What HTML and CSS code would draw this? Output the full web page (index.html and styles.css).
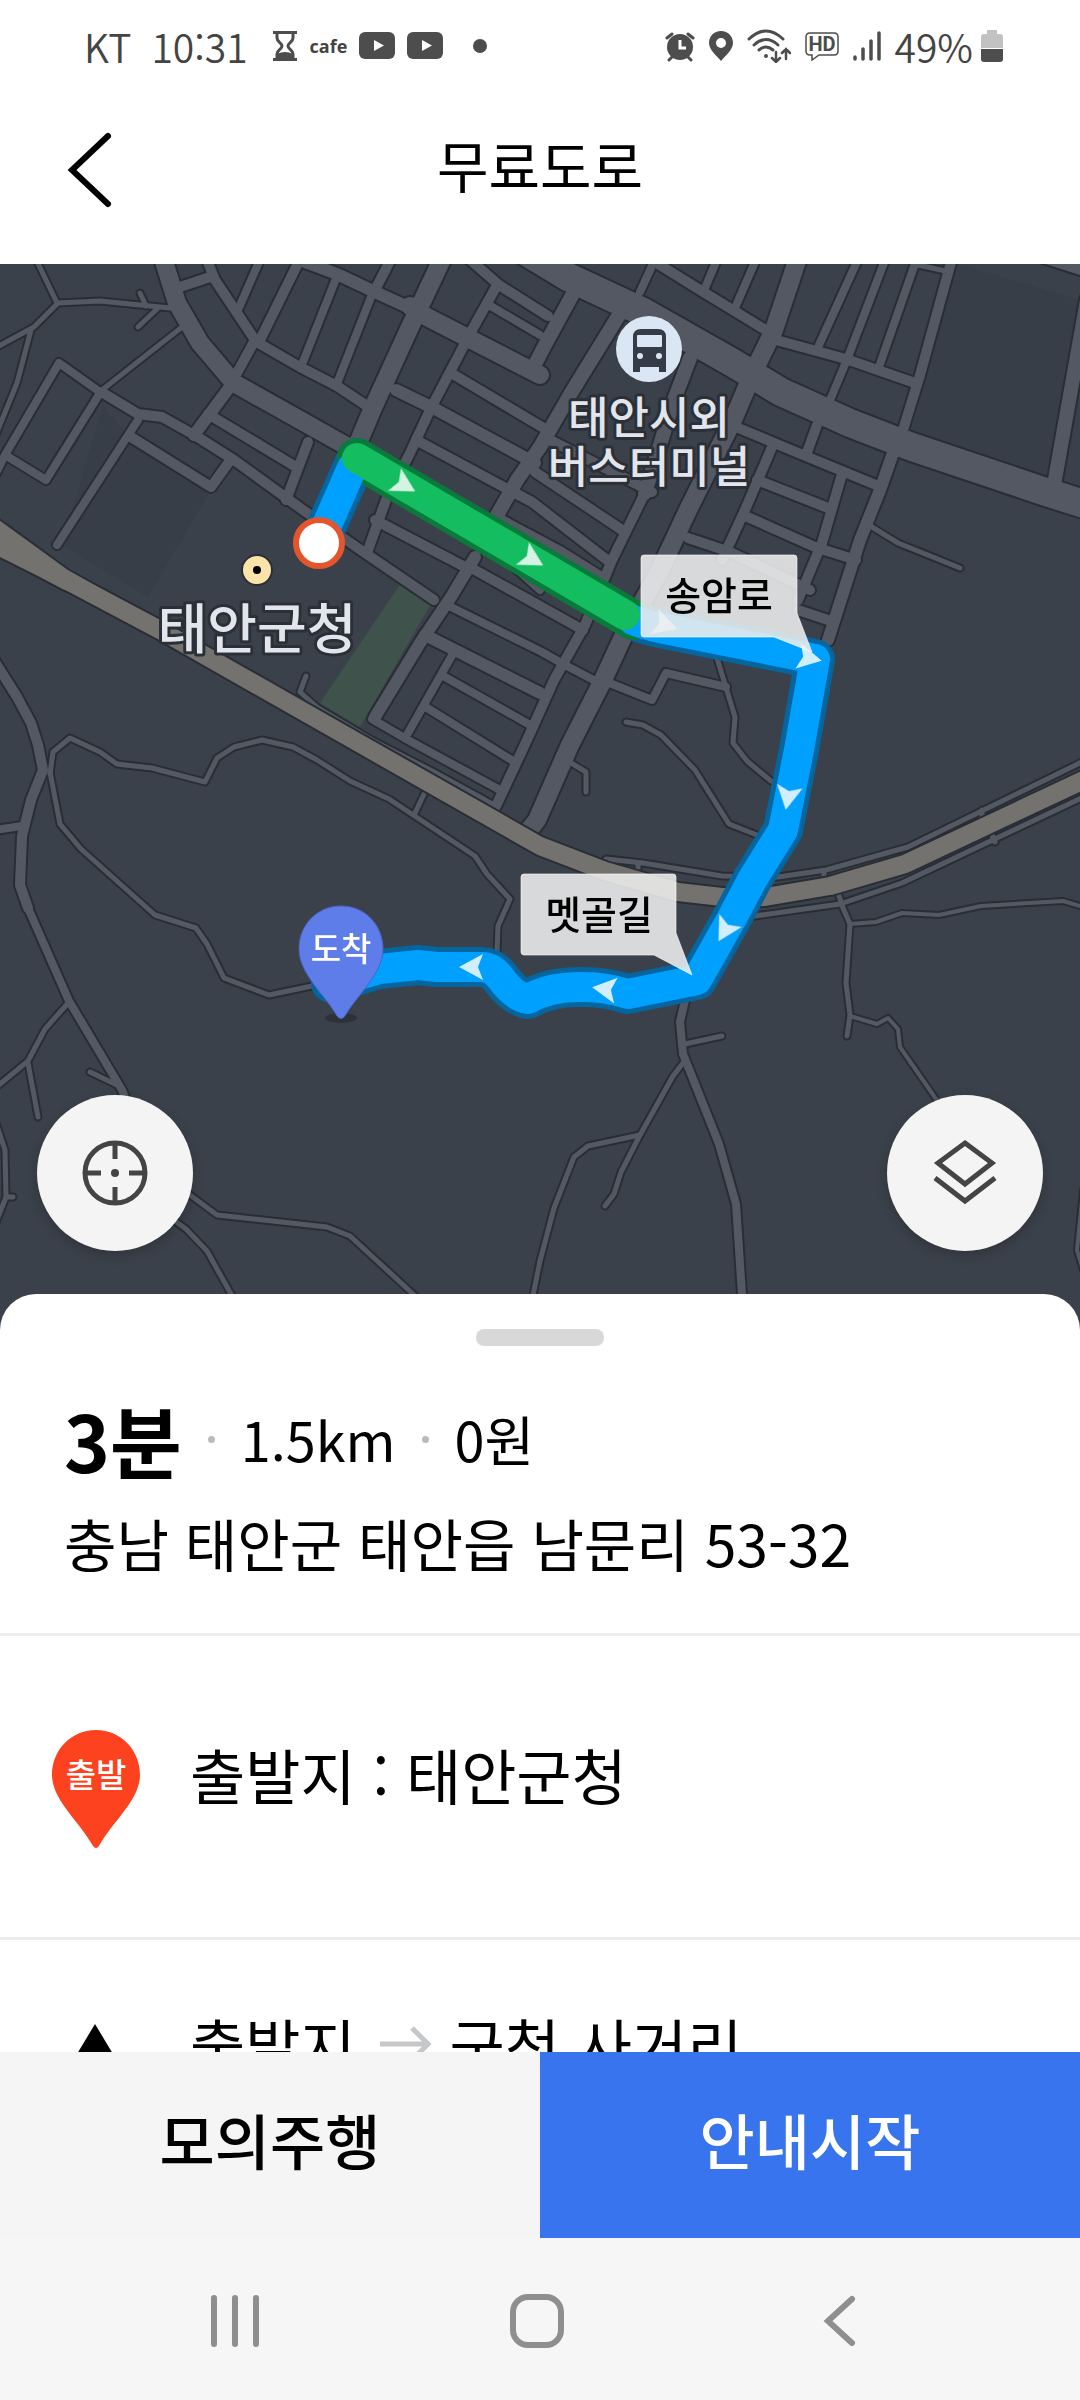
FILE: index.html
```html
<!DOCTYPE html>
<html lang="ko">
<head>
    <meta charset="UTF-8">
    <meta name="viewport" content="width=device-width, initial-scale=1.0">
    <title>무료도로</title>
    <link rel="stylesheet" href="styles.css">
</head>
<body>
    <div class="status-bar">
        <span class="carrier">KT</span>
        <span class="clock">10:31</span>
        <div class="status-icons">
            <svg width="26" height="32" viewBox="0 0 26 32" fill="none" stroke="#4d4d4d" stroke-width="3">
                <path d="M1 2.500H25M1 29.500H25" />
                <path d="M5 3V8C5 12 10 13 10 16S5 20 5 24V29M21 3V8C21 12 16 13 16 16S21 20 21 24V29" />
                <path d="M5 24Q13 20 21 24V29H5Z" fill="#4d4d4d" stroke="none" />
            </svg>
            <span class="cafe">cafe</span>
            <svg width="36" height="28" viewBox="0 0 36 28">
                <rect width="36" height="27" rx="6" fill="#4d4d4d" />
                <path d="M15 8L25 13.500L15 19Z" fill="#fff" />
            </svg>
            <svg width="36" height="28" viewBox="0 0 36 28">
                <rect width="36" height="27" rx="6" fill="#4d4d4d" />
                <path d="M15 8L25 13.500L15 19Z" fill="#fff" />
            </svg>
        </div>
        <span class="more-dot"></span>
        <div class="status-right">
            <svg width="30" height="32" viewBox="0 0 30 32">
                <circle cx="15" cy="17" r="13" fill="#4d4d4d" />
                <path d="M2 8L7 4M28 8L23 4M4 30L8 26M26 30L22 26" stroke="#4d4d4d" stroke-width="3" stroke-linecap="round" />
                <path d="M15 10V18H21" stroke="#fff" stroke-width="3" fill="none" />
            </svg>
            <svg width="24" height="32" viewBox="0 0 24 32">
                <path d="M12 1C5 1 0 6 0 13C0 20 8 26 12 31C16 26 24 20 24 13C24 6 19 1 12 1ZM12 8A5 5 0 1 1 12 18A5 5 0 1 1 12 8Z" fill="#4d4d4d" fill-rule="evenodd" />
            </svg>
            <svg width="44" height="34" viewBox="0 0 44 34" fill="none" stroke="#4d4d4d" stroke-width="3" stroke-linecap="round">
                <path d="M2 10Q19 -6 36 10M7 16Q19 5 31 16M12 21Q19 15 26 21" />
                <circle cx="19" cy="27" r="2" fill="#4d4d4d" stroke="none" />
                <path d="M29 23V32M25 29L29 33L33 29M39 30V20M35 24L39 20L43 24" stroke-width="2.500" />
            </svg>
            <svg width="34" height="30" viewBox="0 0 34 30">
                <path d="M5 2H29Q33 2 33 6V20Q33 24 29 24H14L7 29V24H5Q1 24 1 20V6Q1 2 5 2Z" fill="none" stroke="#4d4d4d" stroke-width="1.500" />
                <text x="17" y="20" class="hd">HD</text>
            </svg>
            <svg width="28" height="32" viewBox="0 0 28 32" stroke="#4d4d4d" stroke-width="3.500" stroke-linecap="round">
                <path d="M2 27V29M10 19V29M18 11V29M26 3V29" />
            </svg>
            <span class="percent">49%</span>
            <svg width="22" height="34" viewBox="0 0 22 34">
                <path d="M6 1H16V5H19Q22 5 22 8V19H0V8Q0 5 3 5H6Z" fill="#c2c2c2" />
                <path d="M0 20H22V30Q22 33 19 33H3Q0 33 0 30Z" fill="#4d4d4d" />
            </svg>
        </div>
    </div>

    <header class="header">
        <button class="back-btn" aria-label="뒤로">
            <svg width="48" height="80" viewBox="0 0 48 80" fill="none" stroke="#000" stroke-width="6" stroke-linecap="round">
                <path d="M42 6L6 40L42 74" />
            </svg>
        </button>
        <h1>무료도로</h1>
    </header>

    <section class="map">
        <svg class="map-canvas" viewBox="0 264 1080 1070" preserveAspectRatio="xMidYMin slice">
            <defs>
                <g id="roads">
                    <!-- main roads -->
                    <path class="w28" d="M520 248L568 277L643 312L733 363L781 392L850 423L912 447L1046 492L1100 509" />
                    <path class="w18" d="M162 255L177 303L200 343L234 383L357 452" />
                    <path class="w18" d="M444 255L410 327L372 410L356 448" />
                    <path class="w18" d="M410 306L427 317L540 375" />
                    <path class="w18" d="M799 255L774 330L752 375L733 420L688 510L660 570L623 637L602 682L570 745L537 820L525 835" />
                    <path class="w14" d="M1087 300L1054 485" />
                    <path class="w12" d="M1040 256L1090 272" />
                    <path class="w14" d="M575 290L545 345L532 370" />
                    <path class="w14" d="M619 315L571 393L540 447L517 480L496 517" />
                    <path class="w12" d="M475 557L451 597L420 643L375 717" />
                    <path class="w14" d="M690 358L674 400L645 493" />
                    <path class="w10" d="M645 493L612 560L585 625L554 680L527 740L496 806" />

                    <!-- north west blocks -->
                    <path class="w10" d="M205 255L215 280L255 340L237 373M177 288L213 276" />
                    <path class="w8" d="M262 255L238 310" />
                    <path class="w10" d="M302 255L260 340M393 255L375 290" />
                    <path class="w8" d="M337 276L301 367M373 292L336 386" />
                    <path class="w12" d="M305 262L337 274L375 292L410 308" />
                    <path class="w10" d="M255 341L300 367L337 386L370 408" />
                    <path class="w12" d="M229 388L194 435" />
                    <path class="w10" d="M103 393L138 414L162 417L196 436L234 460L303 510L365 553L434 600" />
                    <path class="w10" d="M208 414L296 467M308 442L286 500" />
                    <path class="w10" d="M131 437L211 487L229 462" />
                    <path class="w8" d="M138 420L57 545" />
                    <path class="w8" d="M100 393L46 480L5 455L59 363L100 392M5 455L-5 475" />
                    <path class="w5" d="M102 390L182 327" />
                    <path class="w5" d="M34 255L57 303L100 301L170 308M140 293L146 306M157 309L138 327" />
                    <path class="w5" d="M57 304L34 327L-5 348M31 330L17 383L-5 437" />

                    <!-- blocks between the two main streets -->
                    <path class="w10" d="M496 287L472 330L430 410L410 453L386 500L368 550" />
                    <path class="w10" d="M468 258L499 285L548 316" />
                    <path class="w8" d="M489 305L540 335" />
                    <path class="w10" d="M451 373L547 430" />
                    <path class="w12" d="M396 390L437 410L535 463" />
                    <path class="w10" d="M416 440L513 492L532 502L607 560" />
                    <path class="w10" d="M550 440L652 492M535 472L622 530" />
                    <path class="w10" d="M375 520L465 567L475 570L583 630" />
                    <path class="w8" d="M451 607L540 651L565 665L605 686" />
                    <path class="w12" d="M425 635L540 693" />
                    <path class="w8" d="M445 677L532 726M455 650L408 733" />
                    <path class="w8" d="M424 706L513 761M372 719L408 740L500 790" />
                    <path class="w5" d="M306 676L300 692L318 708L372 740L434 772L496 806M434 772L436 780" />
                    <path class="w8" d="M498 517L560 550L600 575" />
                    <path class="w8" d="M490 545L540 590" />

                    <!-- east blocks -->
                    <path class="w8" d="M758 255L735 308M719 255L705 288M657 255L640 292" />
                    <path class="w10" d="M655 262L700 290L764 329" />
                    <path class="w10" d="M953 255L920 375L903 430" />
                    <path class="w8" d="M918 255L879 367M887 255L848 357L828 405M860 255L819 345" />
                    <path class="w10" d="M776 340L846 359L915 383" />
                    <path class="w5" d="M914 264L950 272" />
                    <path class="w12" d="M893 453L880 490L860 540L828 640" />
                    <path class="w10" d="M736 427L808 457L876 485M817 425L806 455" />
                    <path class="w10" d="M772 447L745 510L722 560M757 480L828 508" />
                    <path class="w10" d="M842 474L822 543L798 600" />
                    <path class="w10" d="M743 515L815 547L856 560M688 538L730 552L810 590M798 610L828 620" />
                    <path class="w5" d="M872 527L898 543L960 568" />

                    <!-- lanes south of the town -->
                    <path class="w8" d="M607 682L652 700L666 673L726 687" />
                    <path class="w5" d="M717 658L735 717L733 743L747 761L771 781" />
                    <path class="w5" d="M626 722L643 725L661 735L695 770L729 824L757 835" />
                    <path class="w5" d="M568 761L586 772L586 792" />
                    <path class="w5" d="M606 859L643 863L722 876L778 877L826 870L908 847L1090 758M638 863V880M824 872V880M982 810V822" />
                    <path class="w5" d="M740 918L840 904L902 883L1090 794M990 830L995 842" />
                    <path class="w5" d="M838 893L843 908L850 924L846 983L850 1015L847 1036" />
                    <path class="w4" d="M850 924L876 922L902 913L939 915L981 906L1063 901L1090 909" />
                    <path class="w4" d="M850 1016L877 1024L888 1018L898 1029L900 1047L936 1099L970 1150" />
                    <path class="w8" d="M685 1000L680 1022L683 1054L719 1144L736 1204L745 1340" />
                    <path class="w5" d="M685 1044L722 1036" />
                    <path class="w5" d="M683 1063L673 1076L640 1135L621 1172L614 1194L605 1206" />
                    <path class="w5" d="M640 1135L588 1146L574 1157L554 1208L540 1261L530 1310" />
                    <path class="w4" d="M1083 1190L1077 1250L1083 1270" />
                    <path class="w10" d="M-5 662L17 697L31 723L38 745L43 770L31 800L22 836L20 885L28 908" />
                    <path class="w8" d="M-5 830L22 826M28 908L69 1001L122 1090L150 1160" />
                    <path class="w5" d="M50 774L53 752L70 738L100 752L117 764L152 768L205 782L217 758L234 747L262 740L293 747L317 760L350 781L389 799L475 856L487 874L510 899L498 926L497 951M424 794L415 813" />
                    <path class="w5" d="M50 772L60 824L81 849L155 915L196 928L207 944L224 978L269 995L312 986" />
                    <path class="w5" d="M69 1002L45 1029L28 1061L-5 1088M28 1063L38 1117M90 1072L117 1085" />
                    <path class="w5" d="M-5 1120L5 1150L6 1197L-5 1225M6 1197H13" />
                    <path class="w5" d="M150 1160L190 1195L217 1215L327 1227L350 1236L425 1305M150 1160L160 1210L186 1229L207 1251L240 1310" />
                </g>
                <path id="dart" d="M13 0L-11 -13L-6 0L-11 13Z" />
                <clipPath id="belowHeader"><rect x="-500" y="264" width="2080" height="1070" /></clipPath>
            </defs>

            <g clip-path="url(#belowHeader)">
                <path class="plot" d="M957 264L1080 300L1046 480L911 434Z M103 405L131 440L211 490L148 597L62 545Z" />
                <path class="park" d="M401 583L432 602L360 727L320 703Z" />
                <use href="#roads" class="road-edge" />
                <use href="#roads" class="road-fill" />

                <path class="highway-edge" d="M-10 542L62 578L160 630L350 738L540 846L605 871L678 892L722 897L765 897L830 886L905 864L1090 777" />
                <path class="highway-wedge" d="M-2 518L68 569L160 621L62 590L-2 555Z" />
                <path class="highway" d="M-10 542L62 578L160 630L350 738L540 846L605 871L678 892L722 897L765 897L830 886L905 864L1090 777" />
            </g>

            <!-- places -->
            <circle cx="257" cy="570" r="16" fill="#2a2e35" />
            <circle cx="257" cy="570" r="14" fill="#fbe3aa" />
            <circle cx="257" cy="570" r="4" />
            <text class="place place-lg" x="257" y="649">태안군청</text>

            <circle cx="649" cy="349" r="33" fill="#dbe6f4" />
            <path d="M633 337Q633 329 641 329H658Q666 329 666 337V372H659V367H640V372H633Z" fill="#353c47" />
            <rect x="637" y="335" width="25" height="12" rx="1" fill="#dbe6f4" />
            <circle cx="640" cy="356" r="3" fill="#dbe6f4" />
            <circle cx="659" cy="356" r="3" fill="#dbe6f4" />
            <text class="place" x="649" y="434">태안시외</text>
            <text class="place" x="649" y="483">버스터미널</text>

            <!-- route -->
            <path class="route blue-edge" d="M319 543L357 458" />
            <path class="route blue-edge" d="M633 620Q642 624 660 628L815 659L799 750L783 830L752 880L732 918L697 980L628 994Q605 987 585 987Q550 986 528 999Q515 997 502 980Q493 967 482 967L437 967L418 965L379 969L331 983" />
            <path class="route green-edge" d="M357 458L633 620" />
            <path class="route blue" d="M319 543L352 468" />
            <path class="route blue" d="M633 620Q642 624 660 628L815 659L799 750L783 830L752 880L732 918L697 980L628 994Q605 987 585 987Q550 986 528 999Q515 997 502 980Q493 967 482 967L437 967L418 965L379 969L331 983" />
            <path class="route green" d="M357 458L625 615" />
            <g class="darts">
                <use href="#dart" transform="translate(404 485) rotate(30)" />
                <use href="#dart" transform="translate(532 559) rotate(30)" />
                <use href="#dart" transform="translate(665 625) rotate(18)" />
                <use href="#dart" transform="translate(809 658) rotate(12)" />
                <use href="#dart" transform="translate(788 797) rotate(100)" />
                <use href="#dart" transform="translate(725 930) rotate(120)" />
                <use href="#dart" transform="translate(605 989) rotate(188)" />
                <use href="#dart" transform="translate(472 967) rotate(180)" />
            </g>
            <circle cx="319" cy="543" r="23" fill="#fff" stroke="#e5552d" stroke-width="6" />

            <path class="bubble" d="M644 555H794Q797 555 797 558V613L812 652L774 637H644Q641 637 641 634V558Q641 555 644 555Z" />
            <text class="bubble-text" x="719" y="610">송암로</text>
            <path class="bubble" d="M524 874H673Q676 874 676 877V933L692 975L654 955H524Q521 955 521 952V877Q521 874 524 874Z" />
            <text class="bubble-text" x="599" y="929">멧골길</text>

            <ellipse cx="341" cy="1018" rx="16" ry="5" fill="#24282e" opacity="0.6" />
            <path d="M341 906C317 906 299 925 299 949C299 974 326 996 337 1016Q341 1021 345 1016C356 996 383 974 383 949C383 925 365 906 341 906Z" fill="#5f7de8" stroke="#4a63c4" stroke-width="1" />
            <text class="pin-text" x="341" y="961">도착</text>
        </svg>

        <button class="map-btn locate-btn" aria-label="현재 위치">
            <svg width="70" height="70" viewBox="0 0 70 70" fill="none" stroke="#444" stroke-width="5">
                <circle cx="35" cy="35" r="30" />
                <path d="M35 5V21M35 49V65M5 35H21M49 35H65" />
                <circle cx="35" cy="35" r="4" fill="#444" stroke="none" />
            </svg>
        </button>
        <button class="map-btn layer-btn" aria-label="지도 종류">
            <svg width="70" height="70" viewBox="0 0 70 70" fill="none" stroke="#444" stroke-width="5">
                <path d="M35 5L62 25L35 46L8 25Z" />
                <path d="M5 40L35 63L65 40" />
            </svg>
        </button>
    </section>

    <main class="sheet">
        <div class="handle"></div>
        <div class="summary">
            <div class="summary-line">
                <strong>3분</strong>
                <span class="dot"></span>
                <span>1.5km</span>
                <span class="dot"></span>
                <span>0원</span>
            </div>
            <p class="address">충남 태안군 태안읍 남문리 53-32</p>
        </div>
        <ol class="steps">
            <li class="step step-start">
                <svg class="step-icon" width="88" height="118" viewBox="0 0 88 118">
                    <path d="M44 0C19 0 0 20 0 45C0 70 28 92 41 116Q44 120 47 116C60 92 88 70 88 45C88 20 69 0 44 0Z" fill="#fc421f" />
                    <text class="pin-text" x="44" y="57">출발</text>
                </svg>
                <span>출발지 : 태안군청</span>
            </li>
            <li class="step">
                <svg class="step-icon" width="88" height="80" viewBox="0 0 88 80">
                    <path d="M43 10L67 50H52V80H34V50H19Z" />
                </svg>
                <span>출발지</span>
                <svg class="to-icon" width="52" height="40" viewBox="0 0 52 40" fill="none" stroke="#c5c7c9" stroke-width="5">
                    <path d="M0 20H48M32 4L48 20L32 36" />
                </svg>
                <span>군청 사거리</span>
            </li>
        </ol>
    </main>

    <div class="actions">
        <button class="simulate-btn">모의주행</button>
        <button class="start-btn">안내시작</button>
    </div>

    <nav class="nav-bar">
        <button aria-label="최근 앱">
            <svg width="50" height="54" viewBox="0 0 50 54" fill="none" stroke="#8f8f8f" stroke-width="6" stroke-linecap="round">
                <path d="M4 4V50M25 4V50M46 4V50" />
            </svg>
        </button>
        <button aria-label="홈">
            <svg width="54" height="54" viewBox="0 0 54 54" fill="none" stroke="#8f8f8f" stroke-width="6">
                <rect x="3" y="3" width="48" height="48" rx="15" />
            </svg>
        </button>
        <button aria-label="뒤로">
            <svg width="34" height="54" viewBox="0 0 34 54" fill="none" stroke="#8f8f8f" stroke-width="6" stroke-linecap="round">
                <path d="M30 5L6 27L30 49" />
            </svg>
        </button>
    </nav>
</body>
</html>
```

FILE: styles.css
```css
* {
    box-sizing: border-box;
}

body {
    display: flex;
    flex-direction: column;
    height: 100vh;
    margin: 0;
    overflow: hidden;
    background: #fff;
    color: #000;
    font-family: "Noto Sans CJK KR", "Noto Sans", sans-serif;
}

button {
    margin: 0;
    padding: 0;
    border: none;
    background: none;
    font-family: inherit;
    cursor: pointer;
}

svg {
    display: block;
}

/* Phone status bar */
.status-bar {
    display: flex;
    align-items: center;
    flex: none;
    height: 92px;
    padding: 0 77px 0 84px;
    color: #444;
    font-size: 39px;
    font-weight: 350;
    line-height: 40px;
}

.clock {
    margin: 0 24px 0 20px;
}

.status-icons {
    display: flex;
    align-items: center;
    gap: 12px;
}

.cafe {
    font-family: "Open Sans", sans-serif;
    font-size: 18px;
    font-weight: 700;
}

.more-dot {
    width: 14px;
    height: 14px;
    margin-left: 30px;
    border-radius: 50%;
    background: #4d4d4d;
}

.status-right {
    display: flex;
    align-items: center;
    gap: 14px;
    margin-left: auto;
}

.percent {
    margin-right: -6px;
}

.hd {
    fill: #4d4d4d;
    font-family: Roboto, sans-serif;
    font-size: 20px;
    font-weight: 700;
    text-anchor: middle;
}

/* Title */
.header {
    display: grid;
    grid-template-columns: 1fr auto 1fr;
    align-items: center;
    flex: none;
    height: 172px;
    padding: 0 66px;
}

.header h1 {
    margin: 0;
    padding-bottom: 28px;
    font-size: 56px;
    font-weight: 400;
    line-height: 60px;
}

.back-btn {
    justify-self: start;
    padding-bottom: 16px;
}

/* Map */
.map {
    position: relative;
    flex: none;
    height: 1070px;
    background: #3b414a;
}

.map-canvas {
    width: 100%;
    height: 100%;
}

.plot {
    fill: #383e47;
}

.park {
    fill: #3f524b;
}

/* the same roads are drawn twice, the edge is a wider stroke */
.road-edge,
.road-fill {
    fill: none;
    stroke-linecap: round;
    stroke-linejoin: round;
}

.road-edge {
    --edge: 4px;
    stroke: #292d35;
}

.road-fill {
    --edge: 0px;
    stroke: #545862;
}

.w4 { stroke-width: calc(4px + var(--edge)); }
.w5 { stroke-width: calc(5px + var(--edge)); }
.w8 { stroke-width: calc(8px + var(--edge)); }
.w10 { stroke-width: calc(10px + var(--edge)); }
.w12 { stroke-width: calc(12px + var(--edge)); }
.w14 { stroke-width: calc(14px + var(--edge)); }
.w18 { stroke-width: calc(18px + var(--edge)); }
.w28 { stroke-width: calc(28px + var(--edge)); }

.highway,
.highway-edge {
    fill: none;
    stroke: #74726e;
    stroke-width: 18px;
    stroke-linejoin: round;
}

.highway-edge {
    stroke: #292d35;
    stroke-width: 22px;
}

.highway-wedge {
    fill: #74726e;
    stroke: #292d35;
    stroke-width: 2px;
}

.place {
    fill: #e2e6ec;
    stroke: #2b3038;
    stroke-width: 6px;
    stroke-linejoin: round;
    paint-order: stroke;
    font-size: 44px;
    font-weight: 500;
    text-anchor: middle;
}

.place-lg {
    font-size: 54px;
}

.route {
    fill: none;
    stroke-width: 30px;
    stroke-linecap: round;
    stroke-linejoin: round;
}

.blue { stroke: #00a0ff; }
.green { stroke: #13bd60; }

.blue-edge {
    stroke: #05659f;
    stroke-width: 40px;
}

.green-edge {
    stroke: #0a7a3c;
    stroke-width: 40px;
}

.darts {
    fill: #fff;
    opacity: 0.82;
}

.bubble {
    fill: #eeeeee;
    fill-opacity: 0.88;
    stroke: #fff;
    stroke-opacity: 0.6;
}

.bubble-text {
    font-size: 39px;
    font-weight: 500;
    text-anchor: middle;
}

.pin-text {
    fill: #fff;
    font-size: 33px;
    font-weight: 500;
    text-anchor: middle;
}

.map-btn {
    position: absolute;
    bottom: 83px;
    display: flex;
    align-items: center;
    justify-content: center;
    width: 156px;
    height: 156px;
    border-radius: 50%;
    background: #f4f4f4;
    box-shadow: 0 4px 12px rgba(0, 0, 0, 0.2);
}

.locate-btn {
    left: 37px;
}

.layer-btn {
    right: 37px;
}

/* Bottom sheet */
.sheet {
    position: relative;
    flex: 1;
    min-height: 0;
    margin-top: -40px;
    overflow: hidden;
    border-radius: 36px 36px 0 0;
    background: #fff;
}

.handle {
    width: 128px;
    height: 17px;
    margin: 35px auto 0;
    border-radius: 8px;
    background: #d8d8d8;
}

.summary {
    padding: 48px 64px 46px;
    border-bottom: 3px solid #eee;
}

.summary-line {
    display: flex;
    align-items: center;
    gap: 26px;
    font-size: 54px;
    line-height: 90px;
}

.summary-line strong {
    font-size: 78px;
    font-weight: 700;
}

.dot {
    width: 7px;
    height: 7px;
    border-radius: 50%;
    background: #bbb;
}

.address {
    margin: 13px 0 0;
    font-size: 57px;
    line-height: 90px;
}

.steps {
    margin: 0;
    padding: 0;
    list-style: none;
}

.step {
    display: flex;
    padding: 60px 52px;
    font-size: 60px;
    line-height: 88px;
}

.step-start {
    height: 304px;
    padding-top: 94px;
    border-bottom: 3px solid #ebebeb;
}

.step-icon {
    margin-right: 50px;
}

.step:not(.step-start) .step-icon {
    margin-top: 14px;
}

.to-icon {
    margin: 24px 18px 0 24px;
}

/* Bottom buttons */
.actions {
    position: relative;
    display: flex;
    flex: none;
    height: 186px;
}

.actions button {
    flex: 1;
    padding-bottom: 14px;
    font-size: 60px;
    font-weight: 500;
}

.simulate-btn {
    background: #f5f5f5;
    color: #000;
}

.start-btn {
    background: #3774ee;
    color: #fff;
}

.nav-bar {
    display: flex;
    flex: none;
    height: 162px;
    padding: 4px 90px 0 84px;
    background: #f6f6f6;
}

.nav-bar button {
    display: flex;
    flex: 1;
    align-items: center;
    justify-content: center;
}
```
